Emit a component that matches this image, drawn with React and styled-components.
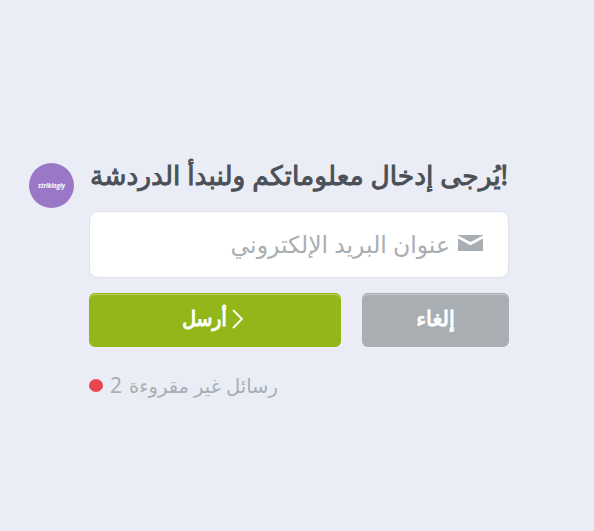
import React from 'react'
import styled, { createGlobalStyle } from 'styled-components'

const GlobalStyle = createGlobalStyle`
  body {
    margin: 0;
    background: #eaedf5;
    font-family: "Noto Sans", "DejaVu Sans", sans-serif;
  }
`
const Page = styled.div`
  box-sizing: border-box;
  display: flex;
  align-items: flex-start;
  gap: 15px;
  height: 531px;
  padding: 155px 0 0 29px;
`
const Avatar = styled.div`
  display: flex;
  align-items: center;
  justify-content: center;
  width: 45px;
  height: 45px;
  margin-top: 8px;
  border-radius: 50%;
  background: #9b77c7;
  color: white;
  font: italic bold 7px/9px "Open Sans", sans-serif;
`
const Brand = styled.span`
  transform: scaleX(0.87);
`
const Form = styled.div`
  width: 420px;
`
const Title = styled.div`
  height: 40px;
  margin-bottom: 16px;
  padding-left: 1px;
  color: #4b5056;
  font-size: 26.5px;
  line-height: 40px;
  white-space: nowrap;
  -webkit-text-stroke: 0.9px #4b5056;
`
const Field = styled.div`
  box-sizing: border-box;
  display: flex;
  align-items: center;
  gap: 8px;
  direction: rtl;
  height: 67px;
  padding: 0 25px 3px;
  border: 1px solid #e1e3e8;
  border-radius: 9px;
  background: white;
`
const Placeholder = styled.span`
  padding-top: 1px;
  color: #a9aeb2;
  font-size: 23.5px;
  line-height: 40px;
  white-space: nowrap;
`
const Buttons = styled.div`
  display: flex;
  gap: 21px;
  margin-top: 15px;
`
const Button = styled.button`
  display: flex;
  align-items: center;
  justify-content: center;
  gap: 5px;
  width: ${props => props.$width}px;
  height: 54px;
  padding: 0 ${props => props.$shift || 0}px 2px 0;
  border: none;
  border-radius: 6px;
  background: ${props => props.$color};
  box-shadow: inset 0 1px 0 ${props => props.$color}, inset 0 2px 0 rgba(255, 255, 255, 0.35);
  color: white;
`
const Label = styled.span`
  padding-bottom: 2px;
  font-family: "Noto Sans", ${props => props.$narrow ? '"DejaVu Sans Condensed"' : '"DejaVu Sans"'}, sans-serif;
  font-size: 21px;
  line-height: 30px;
  -webkit-text-stroke: 1px white;
`
const Unread = styled.div`
  display: flex;
  align-items: center;
  gap: 7px;
  height: 30px;
  margin-top: 23px;
  color: #a9aeb2;
  font-size: 19.5px;
  line-height: 30px;
  white-space: nowrap;
`
const Dot = styled.span`
  width: 14px;
  height: 13px;
  border-radius: 50%;
  background: #e94652;
`
const Count = styled.span`
  margin-right: 2px;
  font-size: 21px;
`

const MailIcon = () => (
  <svg width="25" height="16" viewBox="0 0 25 16" fill="#a9aeb2">
    <path d="M0 0H25V0.6L12.5 7L0 0.6Z" />
    <path d="M0 3.6L12.5 10.2L25 3.6V16H0Z" />
  </svg>
)

const Chevron = () => (
  <svg width="11" height="20" viewBox="0 0 11 20" fill="none" stroke="white" strokeWidth="1.8">
    <path d="M1 1L10 10L1 19" />
  </svg>
)

const App = () => {
  return (
    <>
      <GlobalStyle />
      <Page>
        <Avatar><Brand>strikingly</Brand></Avatar>
        <Form>
          <Title>يُرجى إدخال معلوماتكم ولنبدأ الدردشة!</Title>
          <Field>
            <MailIcon />
            <Placeholder>عنوان البريد الإلكتروني</Placeholder>
          </Field>
          <Buttons>
            <Button $width={252} $color="#93b719" $shift={5}>
              <Label $narrow>أرسل</Label>
              <Chevron />
            </Button>
            <Button $width={147} $color="#a9aeb2">
              <Label>إلغاء</Label>
            </Button>
          </Buttons>
          <Unread>
            <Dot />
            <span><Count>2</Count> رسائل غير مقروءة</span>
          </Unread>
        </Form>
      </Page>
    </>
  )
}

export default App
